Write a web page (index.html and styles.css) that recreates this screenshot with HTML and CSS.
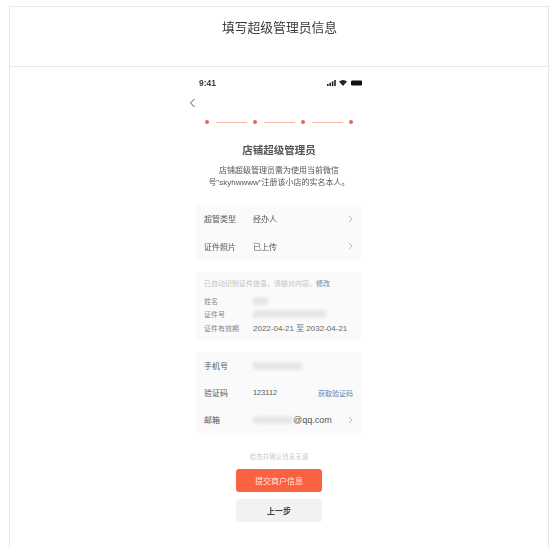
FILE: index.html
```html
<!DOCTYPE html>
<html lang="zh-CN">
<head>
<meta charset="utf-8">
<title>填写超级管理员信息</title>
<link rel="stylesheet" href="styles.css">
</head>
<body>
<main class="panel">
  <header class="panel-head"><h1>填写超级管理员信息</h1></header>
  <section class="phone">
    <div class="status">
      <span class="time">9:41</span>
      <svg class="status-icons" width="36" height="8" viewBox="0 0 36 8">
        <rect x="0" y="5" width="1.6" height="2" fill="#222"/>
        <rect x="2.4" y="3.8" width="1.6" height="3.2" fill="#222"/>
        <rect x="4.8" y="2.4" width="1.6" height="4.6" fill="#222"/>
        <rect x="7.2" y="1" width="1.6" height="6" fill="#222"/>
        <path d="M12 2.6 Q16 -0.6 20 2.6 L16 7 Z" fill="#222"/>
        <rect x="24" y="1.4" width="11" height="5" rx="1.2" fill="#111"/>
      </svg>
    </div>
    <svg class="back" width="7" height="10" viewBox="0 0 7 10"><path d="M5.5 1 L1.5 5 L5.5 9" fill="none" stroke="#555" stroke-width="1"/></svg>
    <div class="steps">
      <i class="dot"></i><i class="line"></i><i class="dot"></i><i class="line"></i><i class="dot"></i><i class="line"></i><i class="dot"></i>
    </div>
    <h2>店铺超级管理员</h2>
    <p class="desc">店铺超级管理员需为使用当前微信<br>号"skyhwwww"注册该小店的实名本人。</p>

    <div class="card rows first">
      <div class="row"><span class="label">超管类型</span><span class="value">经办人</span><svg class="chev" width="5" height="8" viewBox="0 0 5 8"><path d="M1 1 L4 4 L1 7" fill="none" stroke="#aaa" stroke-width=".8"/></svg></div>
      <div class="row"><span class="label">证件照片</span><span class="value">已上传</span><svg class="chev" width="5" height="8" viewBox="0 0 5 8"><path d="M1 1 L4 4 L1 7" fill="none" stroke="#aaa" stroke-width=".8"/></svg></div>
    </div>

    <div class="card info">
      <p class="hint">已自动识别证件信息，请核对内容。<a class="link">修改</a></p>
      <div class="info-row"><span class="info-label">姓名</span><span class="smudge s-name"></span></div>
      <div class="info-row"><span class="info-label">证件号</span><span class="smudge s-id"></span></div>
      <div class="info-row"><span class="info-label">证件有效期</span><span class="date">2022-04-21 至 2032-04-21</span></div>
    </div>

    <div class="card rows third">
      <div class="row"><span class="label">手机号</span><span class="smudge s-phone"></span></div>
      <div class="row"><span class="label">验证码</span><span class="value num">123112</span><a class="link code">获取验证码</a></div>
      <div class="row"><span class="label">邮箱</span><span class="smudge s-mail"></span><span class="mail">@qq.com</span><svg class="chev" width="5" height="8" viewBox="0 0 5 8"><path d="M1 1 L4 4 L1 7" fill="none" stroke="#aaa" stroke-width=".8"/></svg></div>
    </div>

    <p class="confirm">检查并确认信息无误</p>
    <button class="btn primary">提交商户信息</button>
    <button class="btn ghost">上一步</button>
  </section>
</main>
</body>
</html>
```

FILE: styles.css
```css
* { box-sizing: border-box; }
html, body { margin: 0; height: 100%; overflow: hidden; background: #fff; }
body { padding: 6px 5px 0 9px; font-family: "Liberation Sans", "Noto Sans CJK SC", sans-serif; color: #333; }
.panel { height: 542px; border: 1px solid #e8e8e8; border-bottom: 0; }
.panel-head { height: 60px; border-bottom: 1px solid #e8e8e8; padding-top: 11px; }
h1 { margin: 0; padding-left: 1px; font-size: 12.8px; line-height: 19px; font-weight: 400; text-align: center; color: #3a3a3a; filter: blur(.4px); }
.phone { width: 180px; margin: 0 auto; padding: 0 7px; display: flex; flex-direction: column; filter: blur(.5px); }
.status { display: flex; justify-content: space-between; align-items: center; height: 12px; margin-top: 10px; padding: 0 0 0 3px; }
.time { font-size: 8.5px; font-weight: 700; color: #3a3a3a; }
.status-icons { display: block; margin-right: -1px; }
.back { display: block; margin: 9px 0 0 -7px; }
.steps { display: flex; align-items: center; justify-content: space-between; padding: 0 9px; margin-top: 12px; height: 4px; }
.dot { width: 4px; height: 4px; border-radius: 50%; background: #f0614a; }
.line { width: 31px; height: 1px; background: #fbb9ac; }
h2 { margin: 18px 0 0; font-size: 10.5px; line-height: 16px; font-weight: 700; text-align: center; color: #555; }
.desc { margin: 7px 0 0; font-size: 8px; line-height: 12px; text-align: center; color: #555; }
.card { background: #fafafa; border-radius: 4px; }
.first { margin-top: 16px; height: 55px; }
.rows { padding: 0 9px 0 8px; display: flex; flex-direction: column; }
.third { margin-top: 12px; height: 81px; }
.first .row { height: 27.5px; }
.third .row { height: 27px; }
.row { display: flex; align-items: center; font-size: 8px; color: #555; }
.label { width: 49px; flex: none; }
.value { flex: 1; }
.num { font-size: 7.4px; }
.chev { display: block; flex: none; margin-left: auto; }
.info { margin-top: 12px; height: 68px; padding: 6px 8px 0; }
.hint { margin: 0 0 4px; font-size: 7px; line-height: 12px; color: #c2c2c2; white-space: nowrap; }
.link { color: #6783ad; }
.info-row { display: flex; align-items: center; height: 13.5px; font-size: 7px; color: #888; }
.info-label { width: 49px; flex: none; }
.date { font-size: 8px; color: #666; white-space: nowrap; }
.smudge { display: block; height: 8px; background: #e6e6e6; border-radius: 3px; filter: blur(1.5px); }
.s-name { width: 15px; }
.s-id { width: 73px; }
.s-phone { width: 49px; }
.s-mail { width: 40px; }
.mail { font-size: 9px; color: #555; }
.code { margin-left: auto; font-size: 7px; margin-right: 0; }
.confirm { margin: 19px 0 0; font-size: 6.5px; line-height: 10px; text-align: center; color: #cacaca; }
.btn { display: block; width: 86px; height: 23px; margin: 7px auto 0; padding: 0; border: 0; border-radius: 3px; font-family: inherit; font-size: 8px; }
.primary { background: #fb6242; color: #ffe9e3; }
.ghost { background: #f2f2f2; color: #444; font-weight: 700; }
```
